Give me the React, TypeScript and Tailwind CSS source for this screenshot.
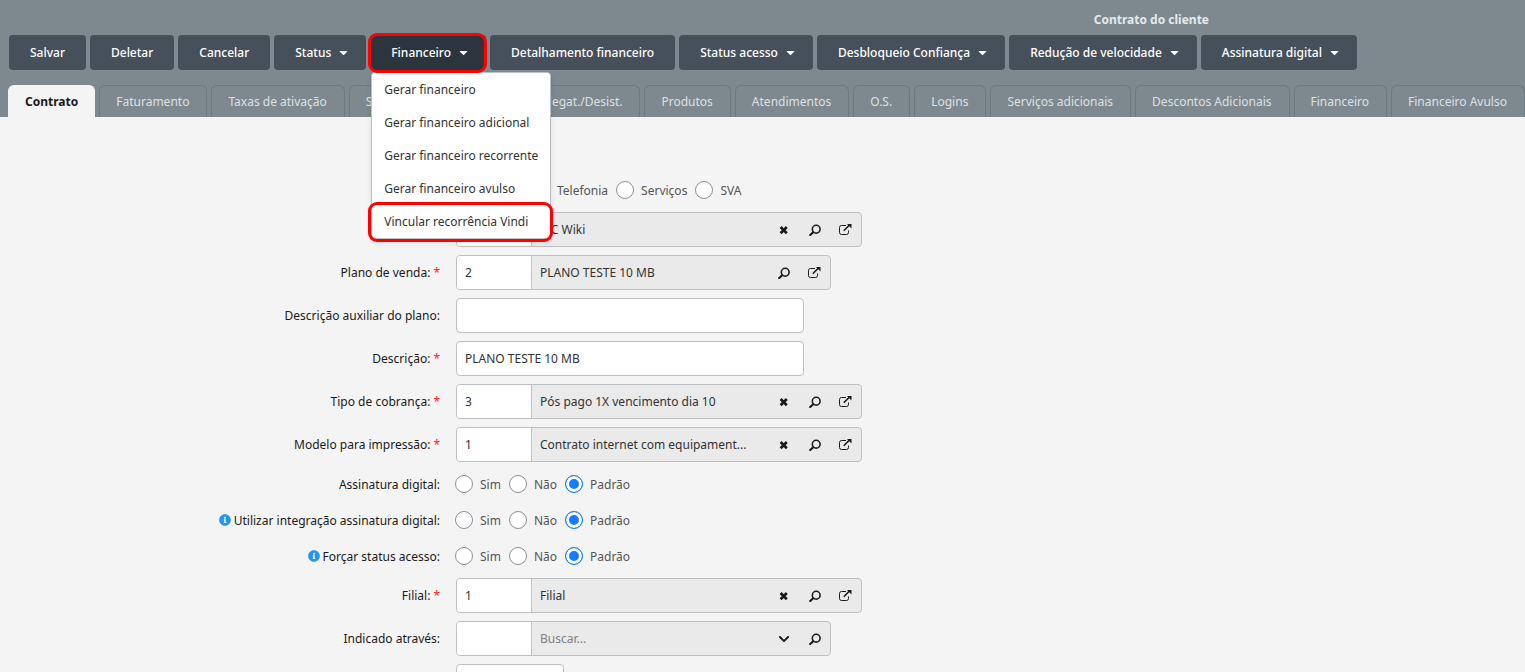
import { useState } from 'react'
import type { ReactNode } from 'react'
import { FaCaretDown, FaChevronDown, FaInfoCircle } from 'react-icons/fa'

type FieldAction = 'clear' | 'expand' | 'search' | 'open'

interface ToolbarAction {
  label: string
  caret?: boolean
  menu?: string[]
}

const TOOLBAR: ToolbarAction[] = [
  { label: 'Salvar' },
  { label: 'Deletar' },
  { label: 'Cancelar' },
  { label: 'Status', caret: true },
  {
    label: 'Financeiro',
    caret: true,
    menu: [
      'Gerar financeiro',
      'Gerar financeiro adicional',
      'Gerar financeiro recorrente',
      'Gerar financeiro avulso',
      'Vincular recorrência Vindi',
    ],
  },
  { label: 'Detalhamento financeiro' },
  { label: 'Status acesso', caret: true },
  { label: 'Desbloqueio Confiança', caret: true },
  { label: 'Redução de velocidade', caret: true },
  { label: 'Assinatura digital', caret: true },
]

const TABS = [
  'Contrato',
  'Faturamento',
  'Taxas de ativação',
  'SVA',
  'Negat./Desist.',
  'Produtos',
  'Atendimentos',
  'O.S.',
  'Logins',
  'Serviços adicionais',
  'Descontos Adicionais',
  'Financeiro',
  'Financeiro Avulso',
]

const ACTION_LABELS: Record<FieldAction, string> = {
  clear: 'Limpar',
  expand: 'Expandir',
  search: 'Pesquisar',
  open: 'Abrir cadastro',
}

export default function App() {
  const [tab, setTab] = useState('Contrato')

  return (
    <div className="flex h-screen flex-col overflow-hidden bg-[#f4f4f4] font-['Noto_Sans','Open_Sans',sans-serif] text-[12px] leading-4 text-[#333]">
      <header className="shrink-0 bg-[#7d898e]">
        <h1 className="ml-[51%] pt-3 pb-[7px] text-center font-bold text-[#e6e9ea]">Contrato do cliente</h1>
        <div className="flex gap-1 pl-[9px]">
          {TOOLBAR.map(action => <ToolbarButton key={action.label} action={action} />)}
        </div>
        <nav className="mt-[15px] flex gap-1 pl-2">
          {TABS.map(item => (
            <button
              key={item}
              onClick={() => setTab(item)}
              className={`h-8 shrink-0 rounded-t-md border border-b-0 pl-4 text-left whitespace-nowrap ${item === 'SVA' ? 'w-[173px]' : ''} ${item === tab ? 'border-[#f4f4f4] bg-[#f4f4f4] pr-4 font-bold text-[#1b1b1b]' : 'border-[#6c7980] pr-[17px] text-[#dde0e2]'}`}
            >
              {item}
            </button>
          ))}
        </nav>
      </header>

      <main className="flex flex-col pt-[55px]">
        <RadioRow name="tipo" options={['', 'Telefonia', 'Serviços', 'SVA']} />
        <LookupRow id="cliente" value="IXC Wiki" actions={['clear', 'search', 'open']} />
        <LookupRow label="Plano de venda:" id="plano" required code="2" value="PLANO TESTE 10 MB" actions={['search', 'open']} />
        <TextRow label="Descrição auxiliar do plano:" id="descricao-aux" />
        <TextRow label="Descrição:" id="descricao" required value="PLANO TESTE 10 MB" />
        <LookupRow label="Tipo de cobrança:" id="cobranca" required code="3" value="Pós pago 1X vencimento dia 10" actions={['clear', 'search', 'open']} />
        <LookupRow label="Modelo para impressão:" id="modelo" required code="1" value="Contrato internet com equipament..." actions={['clear', 'search', 'open']} />
        <RadioRow label="Assinatura digital:" name="assinatura" options={['Sim', 'Não', 'Padrão']} selected="Padrão" />
        <RadioRow label="Utilizar integração assinatura digital:" name="integracao" info options={['Sim', 'Não', 'Padrão']} selected="Padrão" />
        <RadioRow label="Forçar status acesso:" name="forcar" info options={['Sim', 'Não', 'Padrão']} selected="Padrão" />
        <LookupRow label="Filial:" id="filial" required code="1" value="Filial" actions={['clear', 'search', 'open']} />
        <LookupRow label="Indicado através:" id="indicado" actions={['expand', 'search']} />
        <div className="flex py-1 pl-[456px]">
          <input aria-label="Data" className="h-[35px] w-[108px] rounded border border-[#bdc1c5] bg-white px-2 outline-none" />
        </div>
      </main>
    </div>
  )
}

function ToolbarButton({ action }: { action: ToolbarAction }) {
  const open = Boolean(action.menu)
  return (
    <div className="relative shrink-0">
      <button
        aria-expanded={open}
        className={`flex h-[35px] items-center gap-[7px] rounded pl-[21px] font-medium whitespace-nowrap text-white ${action.caret ? 'pr-[17px]' : 'pr-[21px]'} ${open ? 'bg-[#2c343e]' : 'bg-[#46505a]'}`}
      >
        {action.label}
        {action.caret && <FaCaretDown className="h-[13px] w-[11px]" />}
      </button>
      {action.menu && (
        <>
          <ul className="absolute top-[37px] left-px z-10 w-[180px] rounded border border-[#bdc1c5] bg-white shadow-md">
            {action.menu.map((item, index) => (
              <li key={item} className="relative">
                <button className="flex h-[33px] w-full items-center px-3 whitespace-nowrap">{item}</button>
                {index === 4 && <Highlight className="-top-[3px] -right-[3px] -bottom-1 -left-1" />}
              </li>
            ))}
          </ul>
          <Highlight className="-top-0.5 -right-px -bottom-[3px] -left-0.5" />
        </>
      )}
    </div>
  )
}

function Highlight({ className }: { className: string }) {
  return <span className={`pointer-events-none absolute z-20 rounded-[9px] border-3 border-[#fe0000] ${className}`} />
}

function FieldLabel({ htmlFor, required, info, children }: { htmlFor?: string; required?: boolean; info?: boolean; children?: ReactNode }) {
  return (
    <label htmlFor={htmlFor} className="flex w-[440px] shrink-0 items-center justify-end gap-[3px] whitespace-nowrap text-[#1b1b1b]">
      {info && <FaInfoCircle className="h-3 w-3 text-[#2196f3]" />}
      {children}
      {required && <span className="text-[#ff1a1a]">*</span>}
    </label>
  )
}

function TextRow({ label, id, required, value }: { label: string; id: string; required?: boolean; value?: string }) {
  return (
    <div className="flex gap-4 py-1">
      <FieldLabel htmlFor={id} required={required}>{label}</FieldLabel>
      <input id={id} defaultValue={value} className="h-[35px] w-[348px] rounded border border-[#bdc1c5] bg-white px-2 outline-none" />
    </div>
  )
}

interface LookupProps {
  label?: string
  id: string
  required?: boolean
  code?: string
  value?: string
  actions: FieldAction[]
}

function LookupRow({ label, id, required, code, value, actions }: LookupProps) {
  return (
    <div className="flex gap-4 py-1">
      <FieldLabel htmlFor={id} required={required}>{label}</FieldLabel>
      <div className="flex h-[35px] overflow-hidden rounded border border-[#bdc1c5] bg-[#eaeaea]">
        <input id={id} defaultValue={code} className="w-[75px] border-r border-[#bdc1c5] bg-white px-2 outline-none" />
        <input
          aria-label={`${id} nome`}
          defaultValue={value}
          placeholder="Buscar..."
          className="w-[236px] px-2 outline-none placeholder:text-[#808080]"
        />
        {actions.map(action => (
          <button key={action} aria-label={ACTION_LABELS[action]} className="flex w-[31px] items-center justify-center text-[#1b1b1b]">
            <ActionIcon action={action} />
          </button>
        ))}
      </div>
    </div>
  )
}

interface RadioProps {
  label?: string
  name: string
  info?: boolean
  options: string[]
  selected?: string
}

function RadioRow({ label, name, info, options, selected }: RadioProps) {
  return (
    <div role="radiogroup" aria-label={label || name} className="flex h-9 items-center gap-[15px]">
      <FieldLabel info={info}><span className="pt-0.5">{label}</span></FieldLabel>
      <div className="flex items-center gap-2 text-[#555]">
        {options.map(option => (
          <label key={option} className="flex items-center gap-[7px]">
            <input
              type="radio"
              name={name}
              aria-label={option || name}
              defaultChecked={option === selected}
              className="h-[18px] w-[18px] appearance-none rounded-full border border-[#8f8f9d] bg-white checked:border-[#177bfa] checked:bg-[#177bfa] checked:shadow-[inset_0_0_0_3px_#fff]"
            />
            {option ? <span className="pt-0.5">{option}</span> : <span className="w-11" />}
          </label>
        ))}
      </div>
    </div>
  )
}

function ActionIcon({ action }: { action: FieldAction }) {
  if (action === 'expand') return <FaChevronDown className="h-3 w-3" />
  if (action === 'clear') {
    return (
      <svg viewBox="0 0 10 10" className="h-2.5 w-2.5" fill="none" stroke="currentColor" strokeWidth="2.7">
        <path d="M1.6 2l6.2 6.2M7.8 2L1.6 8.2" />
      </svg>
    )
  }
  if (action === 'search') {
    return (
      <svg viewBox="0 0 12 12" className="h-3 w-3" fill="none" stroke="currentColor">
        <circle cx="7.2" cy="5.2" r="3.9" strokeWidth="1.6" />
        <path d="M4.2 8.2L1.2 11.1" strokeWidth="2.1" strokeLinecap="round" />
      </svg>
    )
  }
  return (
    <svg viewBox="0 0 13 12" className="h-3 w-[13px]" fill="none" stroke="currentColor">
      <path d="M7 1.5H2.5q-2 0-2 2v5q0 2 2 2h5q2 0 2-2V6.5" strokeWidth="1" />
      <path d="M4.8 6.7l5.4-5.4" strokeWidth="1.6" />
      <path d="M8 0h4.5v4.5z" fill="currentColor" stroke="none" />
    </svg>
  )
}
